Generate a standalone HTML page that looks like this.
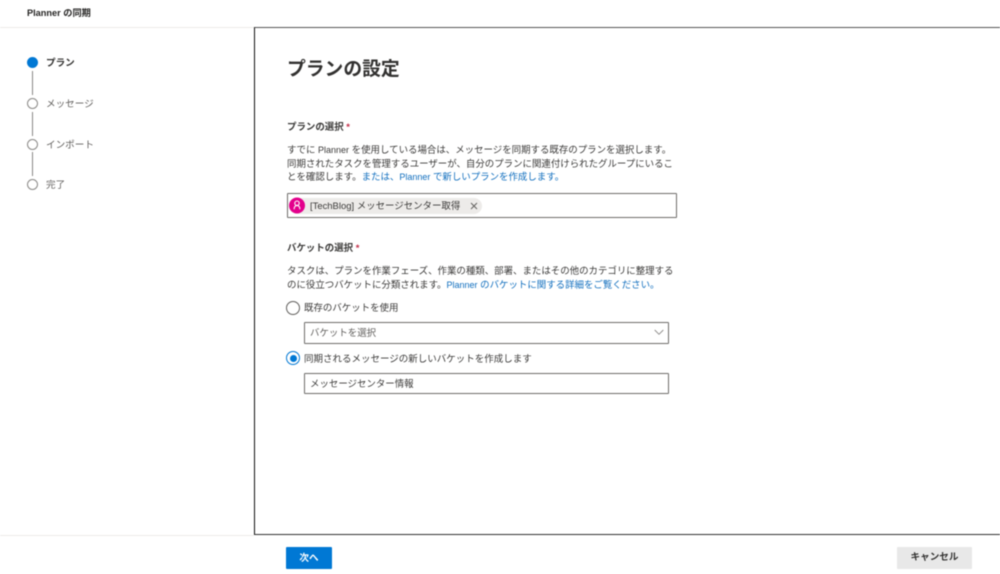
<!DOCTYPE html>
<html lang="ja"><head><meta charset="utf-8"><style>
*{box-sizing:border-box}
html,body{margin:0;padding:0;background:#fff}
body{width:1000px;height:574px;position:relative;overflow:hidden;font-family:"Liberation Sans","Noto Sans CJK JP",sans-serif;color:#323130}
#w{position:absolute;left:0;top:0;width:1000px;height:574px;filter:blur(.4px)}
.a{position:absolute;white-space:nowrap}
.t{font-size:9.45px;line-height:14px;color:#3b3a39}
.b{font-weight:700}
.p{font-size:9px}
a{color:#106ebe;text-decoration:none}
.dot{position:absolute;left:27px;width:11px;height:11px;border:1.5px solid #8a8886;border-radius:50%;background:#fff}
.ln{position:absolute;left:32px;width:1px;height:24px;background:#8a8886}
.box{position:absolute;background:#fff;border:1px solid #6f6d6b;border-radius:1px}
</style></head><body><div id="w">
<div class="a b" style="left:27px;top:5.5px;font-size:9.2px;line-height:14px;color:#252423">Planner の同期</div>
<div class="a" style="left:0;top:27px;width:254px;height:1px;background:#edebe9"></div>
<div class="a" style="left:254px;top:27px;width:746px;height:508px;border:1px solid #111;border-left-width:1.5px;border-right:0;border-top-color:#555;border-bottom-color:#333"></div>

<div class="dot" style="top:57px;background:#0078d4;border-color:#0078d4"></div>
<div class="ln" style="top:71px"></div>
<div class="dot" style="top:98px"></div>
<div class="ln" style="top:112px"></div>
<div class="dot" style="top:139px"></div>
<div class="ln" style="top:152px"></div>
<div class="dot" style="top:179px"></div>
<div class="a b" style="left:46px;top:57px;font-size:9.6px;line-height:14px">プラン</div>
<div class="a" style="left:46px;top:98px;font-size:9.6px;line-height:14px;color:#605e5c">メッセージ</div>
<div class="a" style="left:46px;top:139px;font-size:9.6px;line-height:14px;color:#605e5c">インポート</div>
<div class="a" style="left:46px;top:179px;font-size:9.6px;line-height:14px;color:#605e5c">完了</div>

<div class="a b" style="left:287px;top:57px;font-size:18.8px;line-height:24px;color:#323130">プランの設定</div>

<div class="a b t" style="left:287px;top:121px">プランの選択 <span style="color:#c4314b">*</span></div>
<div class="a t" style="left:287px;top:144px;line-height:13.7px">すでに <span class="p">Planner</span> を使用している場合は、メッセージを同期する既存のプランを選択します。<br>同期されたタスクを管理するユーザーが、自分のプランに関連付けられたグループにいるこ<br>とを確認します。<a>または、<span class="p">Planner</span> で新しいプランを作成します。</a></div>
<div class="box" style="left:287px;top:193px;width:390px;height:25px"></div>
<div class="a" style="left:289px;top:198px;width:193px;height:16px;background:#edebe9;border-radius:8px"></div>
<svg class="a" style="left:289px;top:197px" width="16" height="17" viewBox="0 0 16 17"><circle cx="8" cy="8.5" r="8" fill="#e3008c"/><path d="M5.2 12.2v-.8a2.8 2.8 0 0 1 5.6 0v.8M8 8.4a2.2 2.2 0 1 0 0-4.4 2.2 2.2 0 0 0 0 4.4z" fill="none" stroke="#fff" stroke-width="1.1"/></svg>
<div class="a" style="left:310px;top:200px;font-size:9.45px;line-height:14px;color:#3b3a39">[TechBlog] メッセージセンター取得</div>
<svg class="a" style="left:470px;top:202px" width="8" height="8" viewBox="0 0 8 8"><path d="M1 1l6 6M7 1L1 7" stroke="#605e5c" stroke-width=".9"/></svg>

<div class="a b t" style="left:287px;top:242px">バケットの選択 <span style="color:#c4314b">*</span></div>
<div class="a t" style="left:287px;top:265px;line-height:13.7px">タスクは、プランを作業フェーズ、作業の種類、部署、またはその他のカテゴリに整理する<br>のに役立つバケットに分類されます。<a><span class="p">Planner</span> のバケットに関する詳細をご覧ください。</a></div>

<div class="a" style="left:286px;top:301px;width:14px;height:14px;border:1px solid #605e5c;border-radius:50%"></div>
<div class="a t" style="left:304px;top:302px">既存のバケットを使用</div>
<div class="box" style="left:304px;top:322px;width:365px;height:22px"></div>
<div class="a t" style="left:310px;top:327px;color:#605e5c">バケットを選択</div>
<svg class="a" style="left:654px;top:329px" width="10" height="7" viewBox="0 0 10 7"><path d="M.7 1l4.3 4.3L9.3 1" fill="none" stroke="#8a8886" stroke-width=".9"/></svg>

<div class="a" style="left:286px;top:351px;width:14px;height:14px;border:1px solid #0078d4;border-radius:50%"></div>
<div class="a" style="left:289.5px;top:354.5px;width:7px;height:7px;background:#0078d4;border-radius:50%"></div>
<div class="a t" style="left:304px;top:353px;font-size:9.5px">同期されるメッセージの新しいバケットを作成します</div>
<div class="box" style="left:304px;top:373px;width:365px;height:21px"></div>
<div class="a t" style="left:310px;top:378px;color:#3b3a39">メッセージセンター情報</div>

<div class="a" style="left:0;top:535px;width:254px;height:1px;background:#edebe9"></div>
<div class="a b" style="left:286px;top:547px;width:46px;height:22px;background:#0078d4;border-radius:1px;color:#fff;font-size:9.6px;line-height:23px;text-align:center">次へ</div>
<div class="a b" style="left:897px;top:547px;width:75px;height:22px;background:#e8e8e8;border-radius:1px;color:#323130;font-size:9.6px;line-height:22px;text-align:center">キャンセル</div>
</div></body></html>
